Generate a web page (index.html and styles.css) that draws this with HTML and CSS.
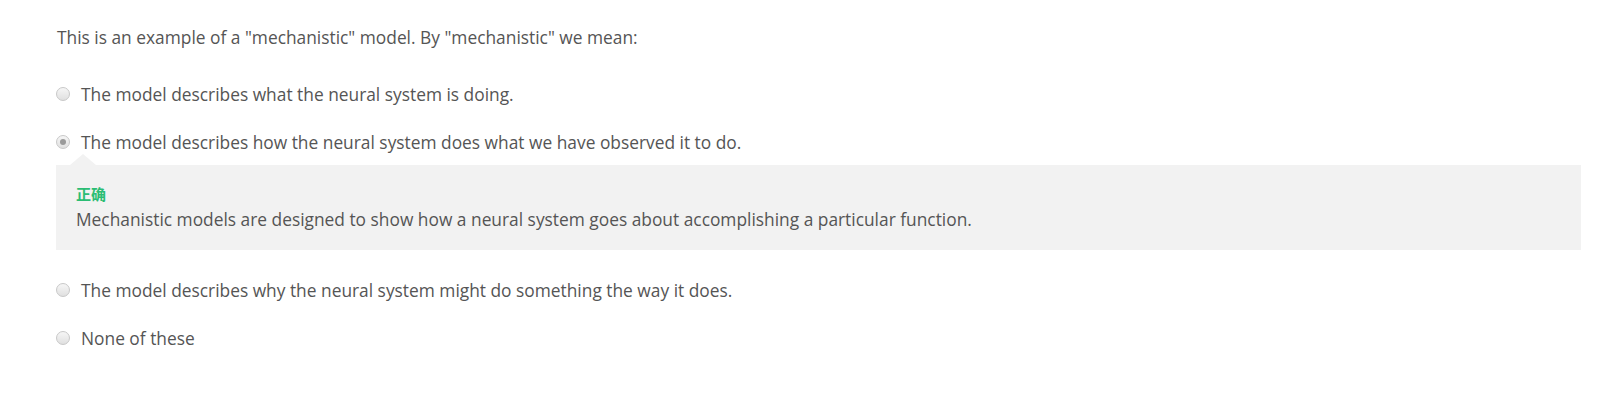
FILE: index.html
```html
<!DOCTYPE html>
<html>
<head>
<meta charset="utf-8">
<link rel="stylesheet" href="styles.css">
</head>
<body>
<div class="quiz">
  <p class="question">This is an example of a "mechanistic" model. By "mechanistic" we mean:</p>
  <div class="options">
    <label class="option"><span class="radio"></span><span class="text">The model describes what the neural system is doing.</span></label>
    <label class="option"><span class="radio checked"></span><span class="text">The model describes how the neural system does what we have observed it to do.</span></label>
    <div class="feedback">
      <div class="status">正确</div>
      <div class="explain">Mechanistic models are designed to show how a neural system goes about accomplishing a particular function.</div>
    </div>
    <label class="option after-feedback"><span class="radio"></span><span class="text">The model describes why the neural system might do something the way it does.</span></label>
    <label class="option"><span class="radio"></span><span class="text">None of these</span></label>
  </div>
</div>
</body>
</html>
```
FILE: styles.css
```css
html, body {
  margin: 0;
  padding: 0;
  background: #ffffff;
}
body {
  font-family: "Open Sans", "Noto Sans CJK SC", sans-serif;
  color: #555555;
  font-size: 17.35px;
}
.quiz {
  padding: 26px 34px 0 56px;
}
.question {
  margin: 0;
  line-height: 22px;
  padding-left: 1px;
}
.options {
  display: flex;
  flex-direction: column;
  margin-top: 34px;
}
.option {
  display: flex;
  align-items: center;
  height: 24px;
  margin-bottom: 24px;
}
.option:last-child { margin-bottom: 0; }
.radio {
  width: 12px;
  height: 12px;
  border-radius: 50%;
  border: 1px solid #c8c8c8;
  background: linear-gradient(#f6f6f6, #e0e0e0);
  flex: none;
  position: relative;
  margin-right: 11px;
}
.radio.checked::after {
  content: "";
  position: absolute;
  left: 3px;
  top: 3px;
  width: 6px;
  height: 6px;
  border-radius: 50%;
  background: #9a9a9a;
}
.text {
  line-height: 24px;
}
.feedback {
  position: relative;
  background: #f2f2f2;
  margin-top: -13px;
  padding: 19px 20px 19px 20px;
}
.feedback::before {
  content: "";
  position: absolute;
  left: 14px;
  top: -11px;
  border-left: 13px solid transparent;
  border-right: 13px solid transparent;
  border-bottom: 11px solid #f2f2f2;
}
.status {
  color: #2bbd74;
  font-weight: bold;
  font-size: 15px;
  line-height: 20px;
  margin-bottom: 3px;
}
.explain {
  line-height: 24px;
}
.after-feedback {
  margin-top: 28px;
}
```
